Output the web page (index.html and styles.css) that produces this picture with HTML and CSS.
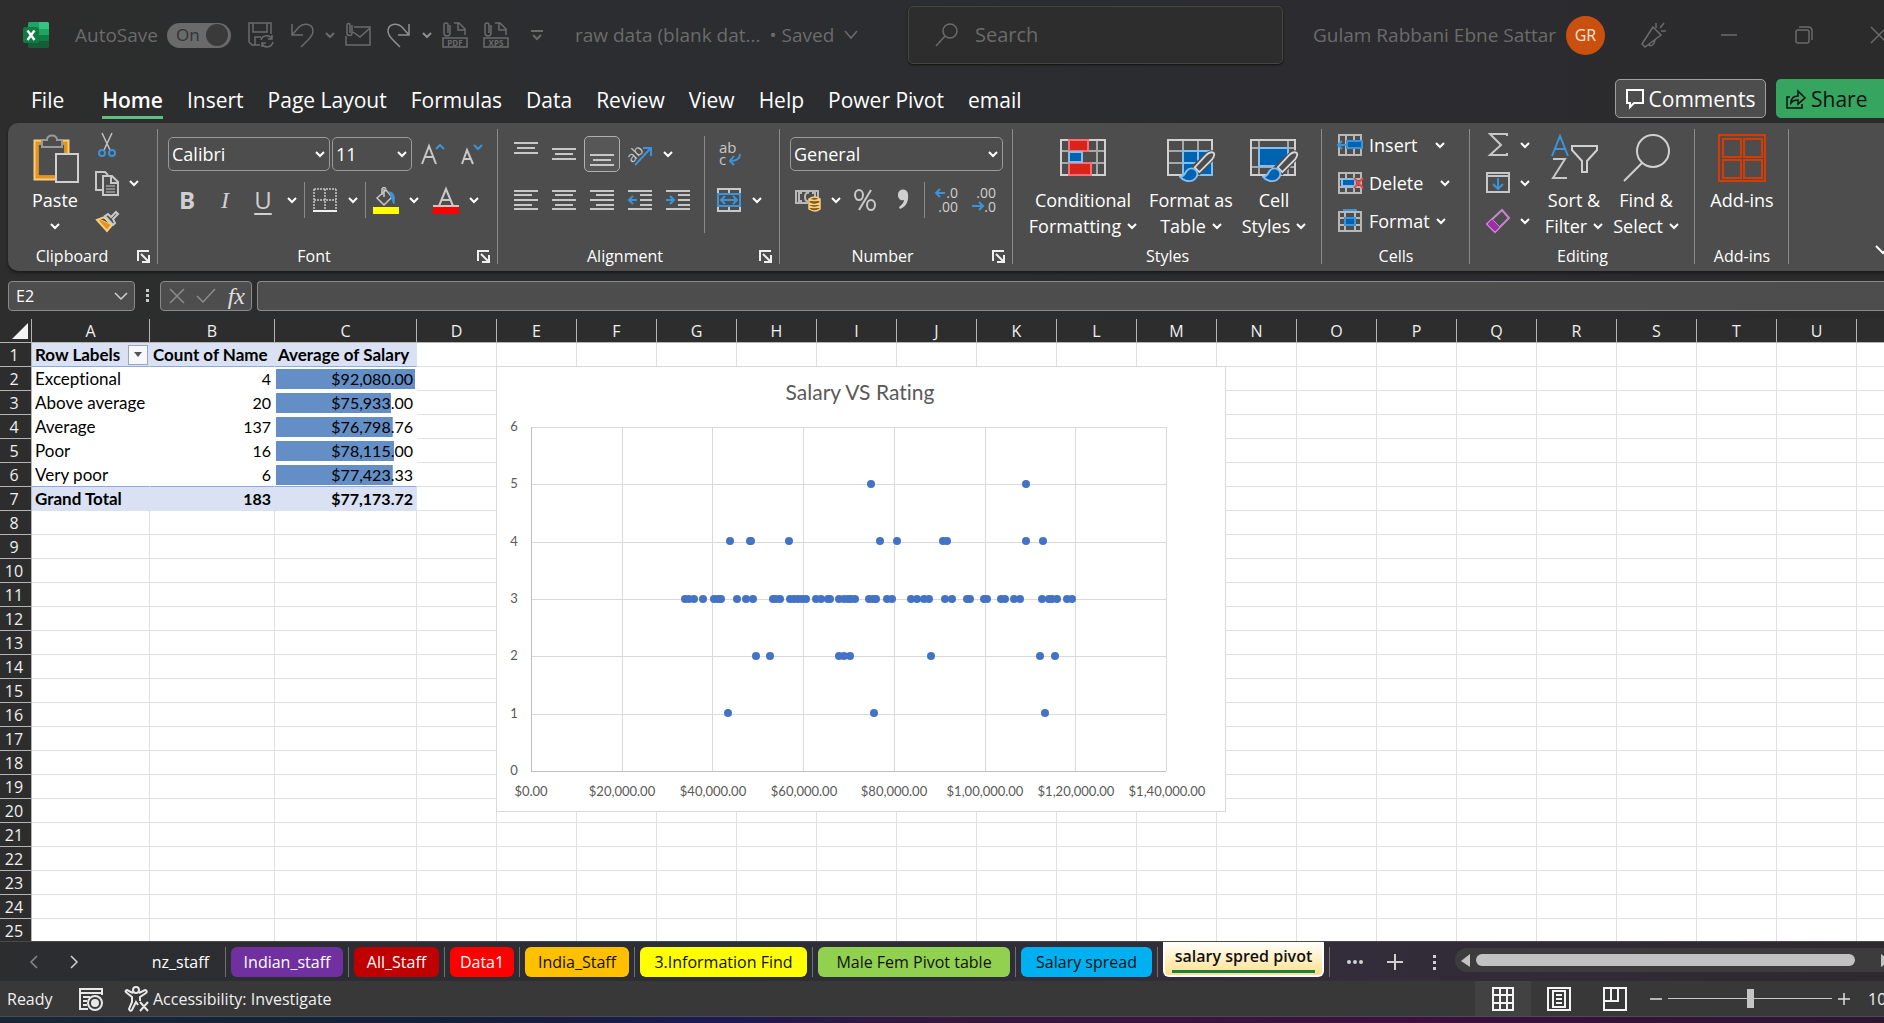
FILE: index.html
```html
<!DOCTYPE html>
<html lang="en">
<head>
<meta charset="utf-8">
<title>raw data - Excel</title>
<link rel="stylesheet" href="styles.css">
</head>
<body>
<svg class="defs" aria-hidden="true">
  <symbol id="chev" viewBox="0 0 10 8"><path d="M1 2l4 4 4-4" fill="none" stroke="currentColor" stroke-width="2"/></symbol>
  <symbol id="launch" viewBox="0 0 13 13"><path d="M1 11V1h11M4 4l7 7M12 5v7H5" fill="none" stroke="#f0f0f0" stroke-width="2"/></symbol>
  <symbol id="brush" viewBox="0 0 40 34"><path d="M37 2c2 1 1 4-1 7L22 24l-7-6L29 5c3-3 6-4 8-3z" fill="#4d4d4d" stroke="#4d4d4d" stroke-width="4"/><path d="M37 2c2 1 1 4-1 7L22 23l-5-5L29 5c3-3 6-4 8-3z" fill="#4d4d4d" stroke="#d8d8d8" stroke-width="2"/><path d="M1 28c5 0 5-3 7-6 3-4 8-4 11 0 2 4 0 8-4 10-5 2-11 0-14-4z" fill="#0063b1" stroke="#83beec" stroke-width="2"/></symbol>
</svg>

<header class="titlebar">
  <div class="title-left">
    <svg class="logo" width="26" height="26" viewBox="0 0 26 26"><path d="M5 1.500a1.500 1.500 0 0 1 1.500-1.500H16v7H5z" fill="#21a366"/><path d="M16 0h8.500A1.500 1.500 0 0 1 26 1.500V7H16z" fill="#33c481"/><path d="M5 7h11v6H5z" fill="#107c41"/><path d="M16 7h10v6H16z" fill="#21a366"/><path d="M5 13h11v6H5z" fill="#185c37"/><path d="M16 13h10v6H16z" fill="#107c41"/><path d="M5 19h21v5.500a1.500 1.500 0 0 1-1.500 1.500h-18A1.500 1.500 0 0 1 5 24.500z" fill="#185c37"/><rect y="5" width="16" height="16" rx="2" fill="#107c41"/><path d="M4.500 8.500L11.500 18M11.500 8.500L4.500 18" stroke="#fff" stroke-width="2.400"/></svg>
    <label class="autosave" for="autosave">AutoSave</label>
    <button class="toggle" id="autosave" role="switch" aria-checked="true">On<span class="knob"></span></button>
    <div class="quick">
      <button class="qbtn" aria-label="Save"><svg width="26" height="26" viewBox="0 0 26 26"><path d="M12 23H4l-3-3V1h22v11M5 1v9h14V1M7 23v-8h6"/><path d="M13 18a6 6 0 0 1 11-1m0-4v4h-4M25 20a6 6 0 0 1-11 2m0 3v-4h4"/></svg></button>
      <button class="qbtn" aria-label="Undo"><svg width="26" height="26" viewBox="0 0 26 26"><path d="M3 2v11h11M3 13l7-8c5-5 14-3 14 4 0 4-2 6-5 9l-7 7"/></svg></button>
      <button class="qchev" aria-label="Undo list"><svg width="10" height="8"><use href="#chev"/></svg></button>
      <button class="qbtn" aria-label="Email"><svg width="26" height="26" viewBox="0 0 26 26"><path d="M9 5h16v18H1V14M8 10l7 5 10-9M7 3v8a2 2 0 0 1-5 0V3a1 1 0 0 1 3 0v8"/></svg></button>
      <button class="qbtn lit" aria-label="Redo"><svg width="26" height="26" viewBox="0 0 26 26"><path d="M23 2v11H12M23 13l-7-8C11 0 2 2 2 9c0 4 2 6 5 9l7 7"/></svg></button>
      <button class="qchev lit" aria-label="Redo list"><svg width="10" height="8"><use href="#chev"/></svg></button>
      <button class="qbtn" aria-label="Publish as PDF"><svg width="26" height="26" viewBox="0 0 26 26"><path d="M1 16h24v9H1zM12 1h5l6 6v6M16 1v7h7M8 3v8a3 3 0 0 1-6 0V3a2 2 0 0 1 4 0v8"/><text x="13" y="24" class="tag">PDF</text></svg></button>
      <button class="qbtn" aria-label="Publish as XPS"><svg width="26" height="26" viewBox="0 0 26 26"><path d="M1 16h24v9H1zM12 1h5l6 6v6M16 1v7h7M8 3v8a3 3 0 0 1-6 0V3a2 2 0 0 1 4 0v8"/><text x="13" y="24" class="tag">XPS</text></svg></button>
      <button class="qbtn" aria-label="Customize toolbar"><svg width="14" height="12" viewBox="0 0 14 12"><path d="M1 2h12M3 6l4 4 4-4" stroke-width="2"/></svg></button>
    </div>
    <button class="docname"><span>raw data (blank dat...</span><span>• Saved</span><svg width="16" height="12" viewBox="0 0 16 12"><path d="M2 2l6 7 6-7"/></svg></button>
  </div>
  <label class="search"><svg width="24" height="26" viewBox="0 0 24 26"><circle cx="15" cy="9" r="7"/><path d="M10 14L1 24"/></svg><input type="search" placeholder="Search" aria-label="Search"></label>
  <div class="title-right">
    <span class="user">Gulam Rabbani Ebne Sattar</span>
    <button class="avatar" aria-label="Account">GR</button>
    <div class="winbtns">
      <button aria-label="What's new"><svg width="26" height="26" viewBox="0 0 26 26"><path d="M12 5l8 8L4 25l-3-3zM7 22c2 3 6 2 7-4M15 1v5M19 6l4-5M20 9h5"/></svg></button>
      <button aria-label="Minimize"><svg width="18" height="18" viewBox="0 0 18 18"><path d="M1 9h16"/></svg></button>
      <button aria-label="Restore"><svg width="18" height="18" viewBox="0 0 18 18"><rect x="1" y="4" width="13" height="13" rx="2"/><path d="M4 1h9q4 0 4 4v9"/></svg></button>
      <button aria-label="Close"><svg width="18" height="18" viewBox="0 0 18 18"><path d="M1 1l16 16M17 1L1 17"/></svg></button>
    </div>
  </div>
</header>

<nav class="menubar">
  <ul class="menus">
    <li><a href="#" class="file">File</a></li><li><a href="#" class="current">Home</a></li><li><a href="#">Insert</a></li><li><a href="#">Page Layout</a></li><li><a href="#">Formulas</a></li><li><a href="#">Data</a></li><li><a href="#">Review</a></li><li><a href="#">View</a></li><li><a href="#">Help</a></li><li><a href="#">Power Pivot</a></li><li><a href="#">email</a></li>
  </ul>
  <div class="actions">
    <button class="comments"><svg width="18" height="20" viewBox="0 0 18 20"><path d="M1 1h16v13H8l-4 4v-4H1z" fill="none" stroke="#fff" stroke-width="2"/></svg>Comments</button>
    <button class="share"><svg width="20" height="20" viewBox="0 0 20 20"><path d="M4 8H1v11h15v-4M5 14c0-5 3-7 7-7V2l7 7-7 6v-4c-3 0-5 0-7 3z" fill="none" stroke="#111" stroke-width="1.500"/></svg>Share<svg class="share-chev" width="10" height="8"><use href="#chev"/></svg></button>
  </div>
</nav>

<section class="ribbon" aria-label="Ribbon">
  <div class="group clipboard">
    <div class="body">
      <button class="big"><svg width="48" height="50" viewBox="0 0 48 50"><path d="M5 9h31v36H5z" fill="none" stroke="#f6ce7d" stroke-width="5"/><path d="M6 10h29v34H6z" fill="none" stroke="#e8921b" stroke-width="3"/><path d="M11 14V7h5c0-6 10-6 10 0h5v7z" fill="#4d4d4d" stroke="#9a9a9a" stroke-width="2"/><path d="M25 21h22v28H25z" fill="#4d4d4d" stroke="#d0d0d0" stroke-width="2"/></svg><span>Paste</span><span><svg width="10" height="8"><use href="#chev"/></svg></span></button>
      <div class="stack">
        <button aria-label="Cut"><svg width="24" height="26" viewBox="0 0 24 26" fill="none" stroke-width="2"><path d="M7 1l8 17M17 1L9 18" stroke="#c4c4c4" stroke-width="1.500"/><circle cx="7" cy="21" r="3" stroke="#3b94d9"/><circle cx="17" cy="21" r="3" stroke="#3b94d9"/></svg></button>
        <button aria-label="Copy"><svg width="24" height="26" viewBox="0 0 24 26" fill="none" stroke="#c8c8c8" stroke-width="2"><path d="M7 20H1V2h9l3 3"/><path d="M8 6h9l6 6v13H8zM16 6v7h7"/><path d="M11 16h9M11 19h9M11 22h9" stroke-width="1"/></svg><svg class="after" width="10" height="8"><use href="#chev"/></svg></button>
        <button aria-label="Format painter"><svg width="24" height="24" viewBox="0 0 24 24"><path d="M2 11l8-3 7 8-5 6z" fill="#e8921b" stroke="#f6ce7d" stroke-width="2"/><path d="M4 10l5-1 6 6z" fill="#4d4d4d" stroke="#f6ce7d" stroke-width="1"/><path d="M10 7l3-2 3 3 5-5 2 2-5 5 2 4-2 2z" fill="#4d4d4d" stroke="#c8c8c8" stroke-width="2"/></svg></button>
      </div>
    </div>
    <h2>Clipboard</h2><button class="launcher" aria-label="Clipboard options"><svg width="13" height="13"><use href="#launch"/></svg></button>
  </div>

  <div class="group font">
    <div class="body rows">
      <div class="line">
        <div class="picker wide"><select aria-label="Font"><option>Calibri</option></select><svg width="10" height="8"><use href="#chev"/></svg></div>
        <div class="picker narrow"><select aria-label="Font size"><option>11</option></select><svg width="10" height="8"><use href="#chev"/></svg></div>
        <button class="tool grow" aria-label="Increase font size"><svg width="24" height="24" viewBox="0 0 24 24" fill="none" stroke="#c8c8c8" stroke-width="2"><path d="M1 22L8 4l7 18M4 15h9"/><path d="M15 7l4-4 4 4" stroke="#3b94d9"/></svg></button>
        <button class="tool grow" aria-label="Decrease font size"><svg width="24" height="24" viewBox="0 0 24 24" fill="none" stroke="#c8c8c8" stroke-width="2"><path d="M3 22L8 8l6 14M5 17h7"/><path d="M15 3l4 4 4-4" stroke="#3b94d9"/></svg></button>
      </div>
      <div class="line">
        <button class="tool letter"><b>B</b></button><button class="tool letter"><i>I</i></button><button class="tool letter"><u>U</u></button><button class="drop" aria-label="Underline styles"><svg width="10" height="8"><use href="#chev"/></svg></button>
        <span class="rule"></span>
        <button class="tool mid" aria-label="Borders"><svg width="24" height="24" viewBox="0 0 24 24"><path d="M1 1h22M1 12h22M1 1v22M12 1v22M23 1v22" stroke="#c8c8c8" stroke-width="1.500" stroke-dasharray="2 1"/><path d="M0 23h24" stroke="#f0f0f0" stroke-width="2"/></svg></button><button class="drop" aria-label="Border styles"><svg width="10" height="8"><use href="#chev"/></svg></button>
        <span class="rule"></span>
        <button class="tool mid" aria-label="Fill color"><svg width="26" height="28" viewBox="0 0 26 28"><path d="M11 3v8M4 12l9-8 6 7-8 8zM9 9V3q2-3 4 0" fill="none" stroke="#c8c8c8" stroke-width="1.500"/><path d="M16 6c5 0 6 4 5 12-2-2-2-8-5-12z" fill="#3b94d9" stroke="#3b94d9"/><path d="M0 21h26v7H0z" fill="#ff0"/></svg></button><button class="drop" aria-label="Fill colors"><svg width="10" height="8"><use href="#chev"/></svg></button>
        <button class="tool mid" aria-label="Font color"><svg width="26" height="28" viewBox="0 0 26 28"><path d="M6 20l7-17 7 17M8 14h10M0 20h26" fill="none" stroke="#c8c8c8" stroke-width="2"/><path d="M0 21h26v7H0z" fill="red"/></svg></button><button class="drop" aria-label="Font colors"><svg width="10" height="8"><use href="#chev"/></svg></button>
      </div>
    </div>
    <h2>Font</h2><button class="launcher" aria-label="Font options"><svg width="13" height="13"><use href="#launch"/></svg></button>
  </div>

  <div class="group align">
    <div class="body">
      <div class="rows">
        <div class="line">
          <button class="tool al" aria-label="Top align"><svg width="24" height="24" viewBox="0 0 24 24"><path d="M0 1h24M3 6h18M0 11h24"/></svg></button><button class="tool al" aria-label="Middle align"><svg width="24" height="24" viewBox="0 0 24 24"><path d="M0 7h24M3 12h18M0 17h24"/></svg></button><button class="tool al on" aria-label="Bottom align"><svg width="24" height="24" viewBox="0 0 24 24"><path d="M0 13h24M3 18h18M0 23h24"/></svg></button><button class="tool al" aria-label="Orientation"><svg width="26" height="26" viewBox="0 0 26 26"><text x="0" y="18" class="ab" transform="rotate(-45 8 14)">ab</text><path d="M8 24L23 8M16 7h8v8" stroke="#3b94d9"/></svg></button><button class="drop" aria-label="Orientation list"><svg width="10" height="8"><use href="#chev"/></svg></button>
        </div>
        <div class="line">
          <button class="tool al" aria-label="Align left"><svg width="24" height="24" viewBox="0 0 24 24"><path d="M0 3h24M0 7h18M0 12h24M0 17h18M0 21h24"/></svg></button><button class="tool al" aria-label="Center"><svg width="24" height="24" viewBox="0 0 24 24"><path d="M0 3h24M3 7h18M0 12h24M3 17h18M0 21h24"/></svg></button><button class="tool al" aria-label="Align right"><svg width="24" height="24" viewBox="0 0 24 24"><path d="M0 3h24M6 7h18M0 12h24M6 17h18M0 21h24"/></svg></button><button class="tool al" aria-label="Decrease indent"><svg width="24" height="24" viewBox="0 0 24 24"><path d="M0 3h24M12 7h12M12 12h12M12 17h12M0 21h24"/><path d="M9 12H1M5 8l-4 4 4 4" stroke="#3b94d9"/></svg></button><button class="tool al" aria-label="Increase indent"><svg width="24" height="24" viewBox="0 0 24 24"><path d="M0 3h24M12 7h12M12 12h12M12 17h12M0 21h24"/><path d="M0 12h8M4 8l4 4-4 4" stroke="#3b94d9"/></svg></button>
        </div>
      </div>
      <span class="rule tall"></span>
      <div class="rows">
        <div class="line"><button class="tool al" aria-label="Wrap text"><svg width="24" height="26" viewBox="0 0 24 26"><text x="2" y="12" class="ab big-ab">ab</text><text x="2" y="24" class="ab big-ab">c</text><path d="M23 13c0 5-3 7-10 7M17 15l-4 5 4 4" stroke="#3b94d9"/></svg></button></div>
        <div class="line"><button class="tool al" aria-label="Merge and center"><svg width="24" height="24" viewBox="0 0 24 24"><path d="M1 1h22v22H1zM12 1v5M12 18v5"/><path d="M1 6h22v12H1zM4 12h16M8 8l-4 4 4 4M16 8l4 4-4 4" stroke="#3b94d9"/></svg></button><button class="drop" aria-label="Merge list"><svg width="10" height="8"><use href="#chev"/></svg></button></div>
      </div>
    </div>
    <h2>Alignment</h2><button class="launcher" aria-label="Alignment options"><svg width="13" height="13"><use href="#launch"/></svg></button>
  </div>

  <div class="group number">
    <div class="body rows">
      <div class="line"><div class="picker full"><select aria-label="Number format"><option>General</option></select><svg width="10" height="8"><use href="#chev"/></svg></div></div>
      <div class="line">
        <button class="tool mid" aria-label="Accounting format"><svg width="26" height="24" viewBox="0 0 26 24"><path d="M1 3h22v12H1z" fill="#4d4d4d" stroke="#b8b8b8" stroke-width="2"/><path d="M7 5H4v8h3M17 5h3v4M14 5q-4-1-4 4t4 4" fill="none" stroke="#b8b8b8" stroke-width="2"/><path d="M14 11v9q6 4 11 0v-9z" fill="#4d4d4d" stroke="#4d4d4d" stroke-width="2"/><path d="M14 11q6-4 11 0v10q-5 4-11 0zM14 11q5 3 11 0M14 15q5 3 11 0M14 18q5 3 11 0" fill="#8a5a13" stroke="#f6ce7d" stroke-width="1.500"/></svg></button><button class="drop" aria-label="Accounting list"><svg width="10" height="8"><use href="#chev"/></svg></button>
        <button class="tool num" aria-label="Percent style"><svg width="24" height="24" viewBox="0 0 24 24" fill="none" stroke="#c8c8c8" stroke-width="2"><ellipse cx="6" cy="7" rx="4" ry="5"/><ellipse cx="18" cy="17" rx="4" ry="5"/><path d="M18 2L6 22"/></svg></button>
        <button class="tool num" aria-label="Comma style"><svg width="14" height="22" viewBox="0 0 14 22"><path d="M2 6a5 5 0 0 1 10-1c1 7-2 13-8 15l-1-2c3-2 5-5 5-7-3 1-6-1-6-5z" fill="#d0d0d0"/></svg></button>
        <span class="rule"></span>
        <button class="tool num" aria-label="Increase decimal"><svg class="dec" width="26" height="28" viewBox="0 0 26 28"><text x="25" y="12">.0</text><text x="25" y="26">.00</text><path d="M12 7H3M7 3L3 7l4 4"/></svg></button>
        <button class="tool num" aria-label="Decrease decimal"><svg class="dec" width="26" height="28" viewBox="0 0 26 28"><text x="25" y="12">.00</text><text x="25" y="26">.0</text><path d="M1 20h11M8 16l4 4-4 4"/></svg></button>
      </div>
    </div>
    <h2>Number</h2><button class="launcher" aria-label="Number options"><svg width="13" height="13"><use href="#launch"/></svg></button>
  </div>

  <div class="group styles">
    <div class="body">
      <button class="big"><svg width="50" height="50" viewBox="0 0 50 50"><path d="M3 7h44v35H3zM3 18h44M3 30h44M11 7v35M39 7v35" fill="none" stroke="#a8a8a8" stroke-width="2"/><path d="M3 7h44v35H3z" fill="none" stroke="#d0d0d0" stroke-width="2"/><path d="M11 7h19v11H11zM11 30h22v12H11z" fill="#d8241a" stroke="#ff6b75" stroke-width="2"/><path d="M11 19h13v10H11z" fill="#0063b1" stroke="#83beec" stroke-width="2"/></svg><span>Conditional</span><span>Formatting <svg width="10" height="8"><use href="#chev"/></svg></span></button>
      <button class="big"><svg width="50" height="50" viewBox="0 0 50 50"><path d="M2 7h44v35H2zM2 18h44M2 30h44M17 7v35M32 7v35" fill="none" stroke="#a8a8a8" stroke-width="2"/><path d="M2 7h44v35H2z" fill="none" stroke="#d0d0d0" stroke-width="2"/><path d="M17 18h29v24H17zM17 30h29M32 18v24" fill="#0063b1" stroke="#83beec" stroke-width="2"/><use href="#brush" x="13" y="17" width="37" height="33"/></svg><span>Format as</span><span>Table <svg width="10" height="8"><use href="#chev"/></svg></span></button>
      <button class="big"><svg width="50" height="50" viewBox="0 0 50 50"><path d="M2 7h44v35H2zM2 15h44M2 34h44M10 7v35M39 7v35" fill="none" stroke="#a8a8a8" stroke-width="2"/><path d="M2 7h44v35H2z" fill="none" stroke="#d0d0d0" stroke-width="2"/><path d="M10 15h29v18H10z" fill="#0063b1" stroke="#83beec" stroke-width="2"/><use href="#brush" x="13" y="17" width="37" height="33"/></svg><span>Cell</span><span>Styles <svg width="10" height="8"><use href="#chev"/></svg></span></button>
    </div>
    <h2>Styles</h2>
  </div>

  <div class="group cells">
    <div class="body stack">
      <button><svg width="26" height="24" viewBox="0 0 26 24"><path d="M2 2h22v20H2zM9 2v20M17 2v20" fill="none" stroke="#b8b8b8" stroke-width="2"/><path d="M10 8h15v7H10z" fill="#0063b1" stroke="#3b94d9" stroke-width="2"/><path d="M10 12H1M5 8l-4 4 4 4" fill="none" stroke="#3b94d9" stroke-width="2"/></svg>Insert<svg class="far" width="10" height="8"><use href="#chev"/></svg></button>
      <button><svg width="26" height="24" viewBox="0 0 26 24"><path d="M2 2h22v20H2zM9 2v20M17 2v20M2 8h22M2 16h22" fill="none" stroke="#b8b8b8" stroke-width="2"/><path d="M5 8h13v7H5z" fill="#0063b1" stroke="#83beec" stroke-width="2"/><path d="M17 7l9 10M26 7l-9 10" stroke="#f04747" stroke-width="2"/></svg>Delete<svg class="far" width="10" height="8"><use href="#chev"/></svg></button>
      <button><svg width="26" height="24" viewBox="0 0 26 24"><path d="M2 3h22v19H2zM2 9h22M2 16h22M8 3v19M18 3v19" fill="none" stroke="#b8b8b8" stroke-width="2"/><path d="M8 9h10v7H8z" fill="#0063b1" stroke="#3b94d9" stroke-width="2"/><path d="M6 1h14" stroke="#3b94d9" stroke-width="2"/></svg>Format<svg class="near" width="10" height="8"><use href="#chev"/></svg></button>
    </div>
    <h2>Cells</h2>
  </div>

  <div class="group editing">
    <div class="body">
      <div class="stack">
        <button aria-label="AutoSum"><svg width="24" height="26" viewBox="0 0 24 26"><path d="M21 4V2H4l11 11L4 23h17v-2" fill="none" stroke="#c8c8c8" stroke-width="2"/></svg><svg class="after" width="10" height="8"><use href="#chev"/></svg></button>
        <button aria-label="Fill"><svg width="24" height="24" viewBox="0 0 24 24"><path d="M1 2h22v19H1zM1 5h22" fill="none" stroke="#c8c8c8" stroke-width="2"/><path d="M12 7v11M7 13l5 5 5-5" fill="none" stroke="#3b94d9" stroke-width="2"/></svg><svg class="after" width="10" height="8"><use href="#chev"/></svg></button>
        <button aria-label="Clear"><svg width="24" height="26" viewBox="0 0 24 26"><path d="M16 2l7 8L9 24l-8-8z" fill="none" stroke="#c886cf" stroke-width="2"/><path d="M6 11l8 8-5 5-8-8z" fill="#9b2fa8" stroke="#c886cf" stroke-width="1"/></svg><svg class="after" width="10" height="8"><use href="#chev"/></svg></button>
      </div>
      <button class="big"><svg width="50" height="50" viewBox="0 0 50 50" fill="none" stroke-width="2"><path d="M3 23l8-20 8 20M6 16h10" stroke="#3b94d9"/><path d="M4 26h12L4 45h14" stroke="#c8c8c8"/><path d="M23 13h25v4L38 28v11h-5V28L23 17z" stroke="#d0d0d0"/></svg><span>Sort &amp;</span><span>Filter <svg width="10" height="8"><use href="#chev"/></svg></span></button>
      <button class="big"><svg width="50" height="50" viewBox="0 0 50 50" fill="none" stroke="#d0d0d0" stroke-width="2"><circle cx="32" cy="18" r="16"/><path d="M21 30L3 48"/></svg><span>Find &amp;</span><span>Select <svg width="10" height="8"><use href="#chev"/></svg></span></button>
    </div>
    <h2>Editing</h2>
  </div>

  <div class="group addins">
    <div class="body"><button class="big"><svg width="50" height="50" viewBox="0 0 50 50" fill="none" stroke="#d83b01" stroke-width="2"><path d="M2 2h46v46H2zM6 6h18v18H6zM27 6h18v18H27zM6 27h18v18H6zM27 27h18v18H27z"/></svg><span>Add-ins</span></button></div>
    <h2>Add-ins</h2>
  </div>
  <button class="collapse" aria-label="Collapse ribbon"><svg width="15" height="10" viewBox="0 0 15 10"><path d="M1 1l7 7 7-7" fill="none" stroke="#fff" stroke-width="2"/></svg></button>
</section>

<section class="formula-row">
  <div class="namebox"><input type="text" value="E2" aria-label="Name box"><svg width="14" height="10" viewBox="0 0 14 10"><path d="M1 2l6 6 6-6" fill="none" stroke="#d0d0d0" stroke-width="1.500"/></svg></div>
  <svg class="grip" width="4" height="14" viewBox="0 0 4 14"><path d="M0 0h3v3H0zM0 5h3v3H0zM0 10h3v3H0z" fill="#c8c8c8"/></svg>
  <div class="fx">
    <button aria-label="Cancel"><svg width="16" height="16" viewBox="0 0 16 16"><path d="M1 1l14 14M15 1L1 15" stroke="#8c8c8c" stroke-width="1.500"/></svg></button>
    <button aria-label="Enter"><svg width="20" height="16" viewBox="0 0 20 16"><path d="M1 8l6 6L19 1" fill="none" stroke="#8c8c8c" stroke-width="1.500"/></svg></button>
    <button class="fn" aria-label="Insert function"><i>fx</i></button>
  </div>
  <input class="formula" type="text" aria-label="Formula bar">
</section>

<main class="sheet">
  <table class="grid" id="grid">
    <colgroup><col class="c-row"><col class="c-a"><col class="c-b"><col class="c-c"></colgroup>
    <thead><tr><th class="corner"><svg width="16" height="16" viewBox="0 0 16 16"><path d="M16 0v16H0z" fill="#f2f2f2"/></svg></th><th>A</th><th>B</th><th>C</th></tr></thead>
    <tbody>
      <tr class="head"><th>1</th><td><div class="filter">Row Labels<button aria-label="Filter row labels"><svg width="8" height="5" viewBox="0 0 8 5"><path d="M0 0h8L4 5z" fill="#555"/></svg></button></div></td><td>Count of Name</td><td>Average of Salary</td></tr>
      <tr class="rec"><th>2</th><td>Exceptional</td><td class="n">4</td><td class="n"><div class="bar" style="--share:100%">$92,080.00</div></td></tr>
      <tr class="rec"><th>3</th><td>Above average</td><td class="n">20</td><td class="n"><div class="bar" style="--share:83%">$75,933.00</div></td></tr>
      <tr class="rec"><th>4</th><td>Average</td><td class="n">137</td><td class="n"><div class="bar" style="--share:84%">$76,798.76</div></td></tr>
      <tr class="rec"><th>5</th><td>Poor</td><td class="n">16</td><td class="n"><div class="bar" style="--share:85%">$78,115.00</div></td></tr>
      <tr class="rec last"><th>6</th><td>Very poor</td><td class="n">6</td><td class="n"><div class="bar" style="--share:84%">$77,423.33</div></td></tr>
      <tr class="total"><th>7</th><td>Grand Total</td><td class="n">183</td><td class="n">$77,173.72</td></tr>
    </tbody>
  </table>
  <figure class="chart">
    <svg width="728" height="444" viewBox="1 2 728 444" role="img" aria-label="Salary VS Rating">
      <g shape-rendering="crispEdges" fill="none" stroke="#d9d9d9">
        <path d="M35 62h635M35 119h635M35 177h635M35 234h635M35 291h635M35 349h635M126 62v344M216 62v344M307 62v344M398 62v344M489 62v344M579 62v344M670 62v344"/>
        <path d="M35 62v344h635" stroke="#bfbfbf"/>
      </g>
      <text class="chart-title" x="364" y="35">Salary VS Rating</text>
      <g class="tick"><text x="18" y="66">6</text><text x="18" y="123">5</text><text x="18" y="181">4</text><text x="18" y="238">3</text><text x="18" y="295">2</text><text x="18" y="353">1</text><text x="18" y="410">0</text>
      <text x="35" y="431">$0.00</text><text x="126" y="431">$20,000.00</text><text x="217" y="431">$40,000.00</text><text x="308" y="431">$60,000.00</text><text x="398" y="431">$80,000.00</text><text x="489" y="431">$1,00,000.00</text><text x="580" y="431">$1,20,000.00</text><text x="671" y="431">$1,40,000.00</text></g>
      <g id="points" fill="#4472c4"></g>
    </svg>
  </figure>
</main>

<nav class="sheetbar">
  <div class="pager"><button aria-label="Previous sheet"><svg width="9" height="14" viewBox="0 0 9 14"><path d="M8 1L2 7l6 6" fill="none" stroke="#8a8a8a" stroke-width="1.500"/></svg></button><button aria-label="Next sheet"><svg width="9" height="14" viewBox="0 0 9 14"><path d="M1 1l6 6-6 6" fill="none" stroke="#d0d0d0" stroke-width="1.500"/></svg></button></div>
  <ul class="tabs">
    <li><a href="#" class="tab nz">nz_staff</a></li>
    <li><a href="#" class="tab purple">Indian_staff</a></li>
    <li><a href="#" class="tab crimson">All_Staff</a></li>
    <li><a href="#" class="tab red">Data1</a></li>
    <li><a href="#" class="tab amber">India_Staff</a></li>
    <li><a href="#" class="tab yellow">3.Information Find</a></li>
    <li><a href="#" class="tab green">Male Fem Pivot table</a></li>
    <li><a href="#" class="tab blue">Salary spread</a></li>
    <li class="active"><a href="#" class="tab" aria-current="page"><span>salary spred pivot</span></a></li>
  </ul>
  <div class="sheet-tools">
    <button aria-label="More sheets"><svg width="16" height="4" viewBox="0 0 16 4" fill="#d0d0d0"><circle cx="2" cy="2" r="2"/><circle cx="8" cy="2" r="2"/><circle cx="14" cy="2" r="2"/></svg></button>
    <button aria-label="New sheet"><svg width="16" height="16" viewBox="0 0 16 16"><path d="M8 0v16M0 8h16" stroke="#d0d0d0" stroke-width="2"/></svg></button>
    <button aria-label="Resize tabs"><svg width="4" height="16" viewBox="0 0 4 16"><path d="M0 1h3v3H0zM0 7h3v3H0zM0 13h3v3H0z" fill="#d0d0d0"/></svg></button>
  </div>
  <div class="scroll"><svg width="9" height="13" viewBox="0 0 9 13"><path d="M9 0v13L0 7z" fill="#c4c4c4"/></svg><span class="thumb"></span><svg width="9" height="13" viewBox="0 0 9 13"><path d="M0 0v13l9-6z" fill="#c4c4c4"/></svg></div>
</nav>

<footer class="status">
  <span class="ready">Ready</span>
  <button class="macro" aria-label="Record macro"><svg width="24" height="24" viewBox="0 0 24 24" fill="none" stroke="#e8e8e8" stroke-width="2"><path d="M9 22H1V2h22v6M1 6h22M4 10h7M4 14h4M4 18h4"/><circle cx="16" cy="16" r="7"/><circle cx="16" cy="16" r="3" fill="#e8e8e8"/></svg></button>
  <button class="access"><svg width="24" height="26" viewBox="0 0 24 26" fill="none" stroke="#e8e8e8" stroke-width="2"><circle cx="11" cy="4" r="3"/><path d="M14 7l6-3q3 1 1 3l-6 4v4M8 7L2 4Q-1 5 2 7l5 4v5L4 23q1 3 3 1l4-8 2 3M15 16l8 9M23 16l-8 9"/></svg>Accessibility: Investigate</button>
  <div class="views">
    <button class="on" aria-label="Normal view"><svg width="22" height="24" viewBox="0 0 22 24"><path d="M1 1h20v22H1zM1 8h20M1 16h20M8 1v22M15 1v22" fill="none" stroke="#f4f4f4" stroke-width="2"/></svg></button>
    <button aria-label="Page layout view"><svg width="24" height="24" viewBox="0 0 24 24"><path d="M1 1h22v22H1zM6 4h12v16H6zM9 8h6M9 12h6M9 16h6" fill="none" stroke="#f4f4f4" stroke-width="2"/></svg></button>
    <button aria-label="Page break view"><svg width="24" height="24" viewBox="0 0 24 24"><path d="M1 1h22v22H1zM1 14h14V1M8 1v13" fill="none" stroke="#f4f4f4" stroke-width="2"/></svg></button>
    <button class="step" aria-label="Zoom out"><svg width="12" height="12" viewBox="0 0 12 12"><path d="M0 6h12" stroke="#e0e0e0" stroke-width="1.500"/></svg></button>
    <input type="range" min="0" max="100" value="50" aria-label="Zoom">
    <button class="step" aria-label="Zoom in"><svg width="12" height="12" viewBox="0 0 12 12"><path d="M0 6h12M6 0v12" stroke="#e0e0e0" stroke-width="1.500"/></svg></button>
    <span class="percent">100%</span>
  </div>
</footer>
<div class="desktop"></div>
<script src="script.js"></script>
</body>
</html>
```
FILE: styles.css
```css
* { box-sizing: border-box; }
html, body { height: 100%; }
body {
  margin: 0;
  display: flex;
  flex-direction: column;
  overflow: hidden;
  background: linear-gradient(90deg, #2d2d2d, #2b2d2f 25%, #2b2d30 50%, #2c2b30 75%, #2b2b2b);
  color: #fff;
  font: 16px/24px "Open Sans", "Noto Sans", sans-serif;
}
button, input, select { font: inherit; color: inherit; background: none; border: 0; padding: 0; margin: 0; }
button { display: flex; align-items: center; justify-content: center; white-space: nowrap; flex: none; }
a { color: inherit; text-decoration: none; }
ul { list-style: none; margin: 0; padding: 0; display: flex; }
svg { flex: none; display: block; overflow: visible; }
.defs { position: absolute; width: 0; height: 0; }

/* Title bar */
.titlebar { display: grid; grid-template-columns: minmax(0, 908fr) minmax(0, 375fr) minmax(0, 601fr); height: 70px; align-items: center; color: #6b6b6b; font-size: 19px; flex: none; }
.titlebar svg { fill: none; stroke: currentColor; stroke-width: 1.5; }
.titlebar .logo { stroke: none; }
.title-left, .title-right { display: flex; align-items: center; overflow: hidden; white-space: nowrap; }
.title-left { padding-left: 23px; }
.autosave { margin-left: 26px; width: 92px; }
.toggle { width: 64px; height: 25px; border-radius: 13px; background: #6a6a6a; color: #333; font-size: 17px; justify-content: space-between; padding: 0 3px 0 9px; }
.knob { width: 22px; height: 22px; border-radius: 50%; background: #3a3a3a; }
.quick { display: flex; margin-left: 9px; }
.qbtn { width: 41px; height: 40px; }
.qchev { width: 15px; height: 40px; }
.lit { color: #909090; }
.tag { font-size: 8px; font-weight: 700; text-anchor: middle; fill: #6b6b6b; stroke: none; }
.docname { margin-left: 18px; gap: 9px; }
.search { display: flex; align-items: center; gap: 16px; height: 58px; padding: 0 26px; border: 1px solid #454545; border-radius: 5px; background: #2d2d2d; box-shadow: 0 1px 2px #111; }
.search input { width: 100%; outline: 0; font-size: 20px; }
.search input::placeholder { color: #6b6b6b; opacity: 1; }
.title-right { padding-left: 30px; }
.user { width: 253px; flex: none; }
.avatar { width: 39px; height: 39px; border-radius: 50%; background: #ca5010; color: #f8e6da; font-size: 16px; }
.winbtns { display: flex; margin-left: 11px; }
.winbtns button { width: 75px; height: 40px; }

/* Menu row */
.menubar { display: flex; justify-content: space-between; align-items: flex-start; height: 53px; padding-top: 9px; font-size: 21px; flex: none; }
.menus { padding-left: 31px; gap: 24px; white-space: nowrap; }
.menus a { display: block; height: 40px; line-height: 42px; }
.menus .file { padding-right: 14px; }
.menus .current { font-weight: 600; border-bottom: 3px solid #5fbf80; }
.actions { display: flex; gap: 10px; width: 269px; overflow: hidden; flex: none; }
.actions button { height: 39px; gap: 5px; border-radius: 5px; }
.comments { width: 151px; background: #4d4d4d; border: 1px solid #a0a0a0; }
.share { width: 130px; background: #36a560; color: #111; justify-content: flex-start; padding-left: 10px; }
.share-chev { margin-left: 12px; }

/* Ribbon */
.ribbon { display: flex; height: 148px; margin-left: 8px; background: #4d4d4d; border-radius: 10px 0 0 10px; box-shadow: 0 2px 3px #1a1a1a; flex: none; overflow: hidden; }
.group { display: grid; grid-template: 120px 26px / 1fr 28px; flex: none; background: linear-gradient(#8a8a8a, #8a8a8a) right 6px / 1px 135px no-repeat; }
.group .body { grid-column: 1 / 3; }
.group h2 { margin: 0; text-align: center; font-size: 16px; line-height: 26px; font-weight: 400; }
.styles h2, .cells h2, .editing h2, .addins h2 { grid-column: 1 / 3; }
.launcher { justify-self: end; width: 13px; margin-right: 8px; }
.clipboard { width: 150px; }
.clipboard h2 { padding-left: 6px; }
.font { width: 340px; }
.align { width: 282px; }
.number { width: 233px; }
.styles { width: 309px; }
.cells { width: 148px; }
.editing { width: 225px; }
.addins { width: 94px; }
.body { display: flex; }
.big { flex-direction: column; justify-content: flex-start; padding-top: 10px; font-size: 18px; line-height: 26px; }
.big > svg { margin-bottom: 4px; }
.big span { display: flex; align-items: center; gap: 6px; min-height: 26px; }
.stack { display: flex; flex-direction: column; padding-top: 3px; }
.stack button { height: 38px; justify-content: flex-start; }
.after { margin-left: 10px; }
.clipboard .body { padding-left: 23px; gap: 16px; }
.rows { display: flex; flex-direction: column; gap: 10px; padding-top: 13px; }
.body.rows { padding-left: 10px; padding-right: 10px; }
.line { display: flex; align-items: center; height: 36px; }
.picker { display: grid; align-items: center; height: 34px; border: 1px solid #9a9a9a; border-radius: 5px; margin-right: 2px; flex: none; }
.picker > * { grid-area: 1 / 1; }
.picker select { appearance: none; width: 100%; height: 32px; padding-left: 3px; font-size: 18px; }
.picker svg { justify-self: end; margin-right: 4px; pointer-events: none; }
.wide { width: 162px; }
.narrow { width: 80px; }
.full { flex: 1; margin: 0; }
.grow { width: 38px; }
.letter { width: 38px; font-size: 24px; color: #d0d0d0; }
.letter i { font-family: "Liberation Serif", serif; }
.letter u { text-underline-offset: 4px; text-decoration-thickness: 2px; }
.drop { width: 20px; height: 34px; }
.mid { width: 36px; }
.drop + .mid { margin-left: 4px; }
.rule { width: 1px; height: 36px; margin: 0 2px; background: #8a8a8a; flex: none; }
.tall { height: 97px; margin: 13px 0 0 7px; }
.al { width: 38px; height: 36px; }
.al svg { fill: none; stroke: #c8c8c8; stroke-width: 2; }
.al.on { width: 36px; margin: 0 1px; border: 1px solid #b0b0b0; border-radius: 5px; background: #575757; }
.align .body { padding-left: 9px; }
.align .drop { width: 18px; }
.align .rows + .rule + .rows { padding-left: 5px; }
.ab { font-size: 15px; fill: #c8c8c8; stroke: none; }
.num { width: 38px; }
.dec text { font-size: 14px; text-anchor: end; fill: #d0d0d0; }
.dec path { fill: none; stroke: #3b94d9; stroke-width: 2; }
.styles .body { display: grid; grid-template-columns: 120px 96px 70px; padding-left: 10px; }
.cells .body { padding-left: 15px; }
.cells button { font-size: 18px; gap: 6px; }
.far { margin-left: 11px; }
.editing .body { padding-left: 16px; }
.editing .big { width: 72px; }
.editing .stack { width: 52px; }
.addins .body { justify-content: center; }
.collapse { margin: 120px 0 0 86px; height: 14px; }

/* Formula row */
.formula-row { display: flex; align-items: center; height: 30px; margin: 10px 0 8px 8px; flex: none; }
.namebox, .fx, .formula { height: 30px; background: #4d4d4d; border: 1px solid #8a8a8a; border-radius: 4px; }
.namebox { display: flex; align-items: center; width: 127px; padding: 0 6px 0 7px; }
.namebox input { flex: 1; min-width: 0; }
.grip { margin: 0 10px 0 11px; }
.fx { display: flex; align-items: center; justify-content: space-between; width: 92px; padding: 0 6px 0 8px; }
.fn { font: 24px/24px "Liberation Serif", serif; color: #e0e0e0; }
.formula { flex: 1; min-width: 0; margin-left: 5px; border-right: 0; border-radius: 4px 0 0 4px; padding: 0 8px; }

/* Worksheet */
.sheet { position: relative; flex: 1; min-height: 0; overflow: hidden; background: #fff; color: #000; }
.grid { border-collapse: separate; border-spacing: 0; table-layout: fixed; width: 0; font: 17px/22px Lato, sans-serif; font-variant-ligatures: none; }
.c-row { width: 32px; }
.c-a { width: 118px; }
.c-b { width: 125px; }
.c-c { width: 142px; }
.c-std { width: 80px; }
.grid tr { height: 24px; }
.grid th, .grid td { height: 24px; padding: 0 3px; white-space: nowrap; border-right: 1px solid #e0e0e0; border-bottom: 1px solid #e0e0e0; }
.grid th { padding: 0; background: #2d2d2d; color: #f0f0f0; font: 16px/22px "Open Sans", sans-serif; border-color: #b4b4b4; }
.grid tbody th { padding-right: 3px; }
.corner svg { margin-left: 12px; }
.grid .n { text-align: right; font-size: 16px; }
.head td:nth-child(-n+4), .total td:nth-child(-n+4) { background: #d9e1f2; border-right-color: #d9e1f2; font-weight: 700; }
.head td:nth-child(-n+4), .last td:nth-child(-n+4) { border-bottom-color: #8ea9db; }
.rec td:nth-child(-n+4) { border-right-color: #fff; }
.rec:not(.last) td:nth-child(-n+4) { border-bottom-color: #fff; }
.total td:nth-child(-n+4) { border-bottom-color: #d9e1f2; }
.filter { display: flex; justify-content: space-between; align-items: center; margin-right: -2px; }
.filter button { width: 20px; height: 20px; border: 1px solid #9aa5b5; background: #f6f8fc; }
.grid td:has(.bar) { padding: 0 1px; }
.bar { height: 20px; line-height: 20px; padding-right: 2px; background: linear-gradient(#638ec6, #638ec6) no-repeat; background-size: var(--share) 100%; }
.chart { position: absolute; left: 496px; top: 47px; margin: 0; background: #fff; border: 1px solid #d9d9d9; }
.chart text { font-family: Lato, sans-serif; font-variant-ligatures: none; fill: #595959; text-anchor: middle; }
.chart .chart-title { font-size: 21px; }
.tick { font-size: 13px; }

/* Sheet tabs */
.sheetbar { display: flex; height: 40px; border-top: 1px solid #4a4a4a; background: linear-gradient(90deg, #2b2d2f, #2c2e36 40%, #332c3a 72%, #2d2a2e); flex: none; }
.pager { display: flex; width: 125px; padding-left: 13px; flex: none; }
.pager button { width: 41px; }
.tabs { flex: none; }
.tabs li { display: flex; align-items: center; }
.tabs li::after { content: ""; width: 1px; height: 30px; margin: 0 5px; background: #707070; }
.tab { display: block; height: 30px; line-height: 30px; border-radius: 6px; text-align: center; color: #111; }
.tabs .nz { width: 95px; padding-right: 11px; text-align: right; color: #fff; }
.purple { width: 112px; background: #7030a0; color: #fff; }
.crimson { width: 85px; background: #c00000; color: #fff; }
.red { width: 64px; background: #f00; color: #fff; }
.amber { width: 104px; background: #ffc000; }
.yellow { width: 167px; background: #ff0; }
.green { width: 192px; background: #92d050; }
.blue { width: 131px; background: #00b0f0; }
.active .tab { width: 161px; height: 35px; margin-top: -5px; padding: 0 7px; border: 2px solid #fff; border-top: 0; border-radius: 0 0 6px 6px; background: linear-gradient(#fff, #ffe08a); font-weight: 600; line-height: 28px; }
.active span { display: block; border-bottom: 3px solid #1a8046; }
.sheet-tools { display: flex; flex: none; }
.sheet-tools button { width: 40px; }
.scroll { display: flex; align-items: center; flex: 1; gap: 6px; height: 24px; margin: 6px -6px 0 0; padding-left: 6px; border-radius: 12px 0 0 12px; background: #3c3c3c; }
.thumb { flex: 1; height: 12px; margin-right: 20px; border-radius: 6px; background: #c2c2c2; }

/* Status bar */
.status { display: flex; align-items: center; height: 35px; padding-left: 7px; background: #383838; color: #f0f0f0; flex: none; }
.ready { width: 72px; }
.macro { width: 24px; }
.access { margin-left: 22px; gap: 4px; }
.views { display: flex; align-items: center; margin-left: auto; width: 409px; height: 35px; overflow: hidden; flex: none; }
.views button { width: 56px; height: 35px; }
.views .on { background: #424242; }
.views .step { width: 12px; margin: 0 6px; flex: none; }
.views button + .step { margin-left: 7px; }
.views input { appearance: none; width: 164px; height: 18px; background: linear-gradient(#c8c8c8, #c8c8c8) center / 100% 1px no-repeat; flex: none; }
.views input::-webkit-slider-thumb { appearance: none; width: 7px; height: 19px; background: #c4c4c4; }
.percent { margin-left: 12px; }
.desktop { height: 7px; background: linear-gradient(90deg, #182733, #141f3a 25%, #1c1a50 38%, #35183c 50%, #3c0f3f 75%, #2c1730); border-top: 1px solid #4a4a55; flex: none; }
```
FILE: script.js
```js
// Extend the worksheet to 25 rows and columns D to V.
const grid = document.getElementById("grid");
const letters = "DEFGHIJKLMNOPQRSTUV".split("");
const body = grid.tBodies[0];

for (let row = 8; row <= 25; row++) {
  const tr = body.insertRow();
  const th = document.createElement("th");
  th.textContent = row;
  tr.append(th);
  for (let i = 0; i < 3; i++) tr.insertCell();
}
for (const letter of letters) {
  const col = document.createElement("col");
  col.className = "c-std";
  grid.querySelector("colgroup").append(col);
  const th = document.createElement("th");
  th.textContent = letter;
  grid.tHead.rows[0].append(th);
  for (const tr of body.rows) tr.insertCell();
}

// Scatter markers, by the height of their rating line.
const ratings = {
  119: [375, 530],
  176: [234, 254, 255, 293, 384, 401, 447, 451, 530, 547],
  234: [189, 193, 198, 207, 218, 222, 225, 241, 250, 257, 277, 280, 284, 294, 298, 302, 306, 310, 320, 325, 332, 334, 343, 348, 352, 355, 359, 373, 377, 380, 391, 396, 415, 421, 428, 433, 449, 456, 471, 474, 488, 491, 505, 509, 518, 524, 546, 553, 556, 561, 571, 576],
  291: [260, 274, 343, 348, 354, 435, 544, 559],
  348: [232, 378, 549]
};
const points = document.getElementById("points");
for (const [y, xs] of Object.entries(ratings)) {
  for (const x of xs) {
    const dot = document.createElementNS("http://www.w3.org/2000/svg", "circle");
    dot.setAttribute("cx", x);
    dot.setAttribute("cy", y);
    dot.setAttribute("r", 4);
    points.append(dot);
  }
}
```
